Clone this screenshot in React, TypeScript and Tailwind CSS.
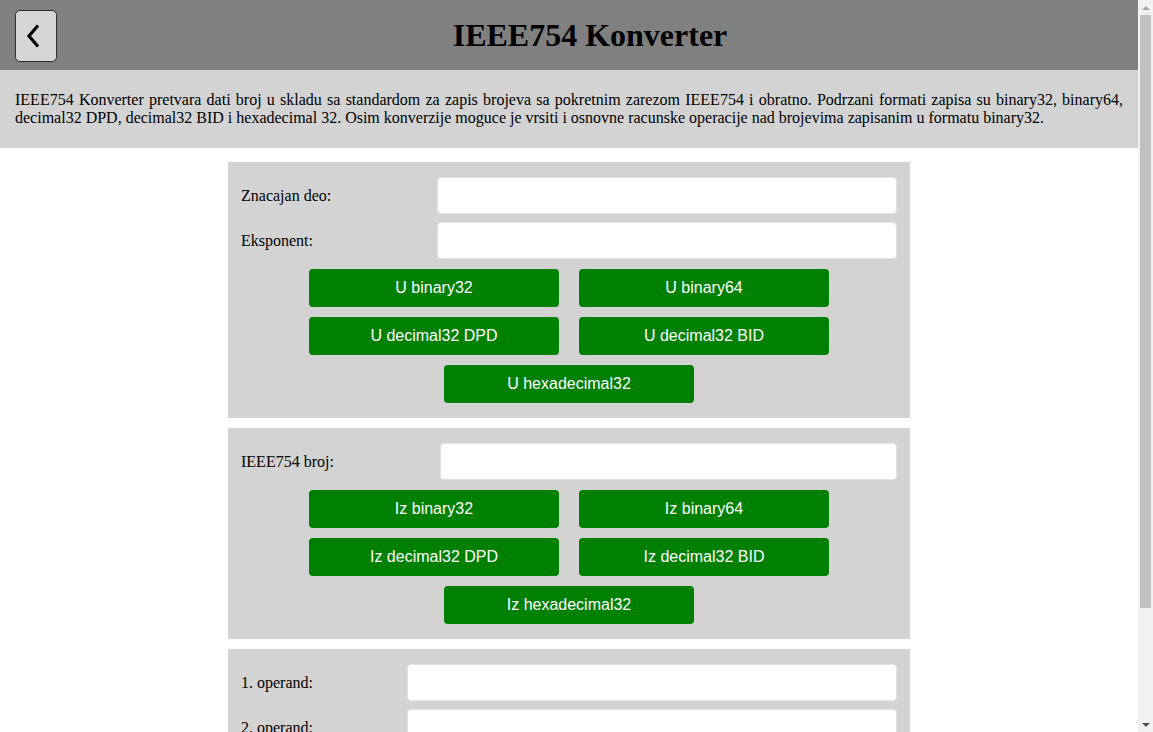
import React from "react";

const serif = { fontFamily: '"Liberation Serif", "Times New Roman", serif' };

function Field({ label, labelWidth }: { label: string; labelWidth: string }) {
  return (
    <div className="flex items-center">
      <label className={`${labelWidth} shrink-0 text-base text-black`}>{label}</label>
      <input
        type="text"
        className="h-[37px] flex-1 rounded-[4px] border border-[#e2e2e2] bg-white px-2 outline-none"
      />
    </div>
  );
}

function GreenButton({ children }: { children: React.ReactNode }) {
  return (
    <button
      className="h-[38px] w-[250px] rounded-[4px] bg-[#008000] text-base text-white"
      style={{ fontFamily: '"Liberation Sans", Arial, sans-serif' }}
    >
      {children}
    </button>
  );
}

function ButtonRows({ rows }: { rows: string[][] }) {
  return (
    <div className="mt-[10px] flex flex-col gap-[10px]">
      {rows.map((row) => (
        <div key={row.join()} className="flex justify-center gap-[20px]">
          {row.map((b) => (
            <GreenButton key={b}>{b}</GreenButton>
          ))}
        </div>
      ))}
    </div>
  );
}

// stand-in for the browser's page scrollbar seen in the screenshot
function Scrollbar() {
  return (
    <aside className="flex w-[15px] shrink-0 flex-col items-center bg-[#f1f1f1]">
      <div className="flex h-[15px] w-full items-center justify-center">
        <div className="h-0 w-0 border-x-[4px] border-b-[4px] border-x-transparent border-b-[#a3a3a3]" />
      </div>
      <div className="h-[593px] w-[11px] bg-[#c1c1c1]" />
      <div className="flex-1" />
      <div className="flex h-[15px] w-full items-center justify-center">
        <div className="h-0 w-0 border-x-[4px] border-t-[4px] border-x-transparent border-t-[#505050]" />
      </div>
    </aside>
  );
}

export default function App() {
  return (
    <div className="flex h-screen w-full bg-white text-black" style={serif}>
      <div className="min-w-0 flex-1 overflow-y-auto">
        <header className="flex h-[70px] items-start bg-[#808080] px-[15px] pt-[10px]">
          <button className="flex h-[52px] w-[42px] shrink-0 items-center justify-center rounded-[5px] border border-[#2e2e2e] bg-[#d6d6d6]">
            <svg width="22" height="26" viewBox="0 0 22 26" fill="none">
              <path d="M13 2.5 L4 13 L13 23.5" stroke="#000" strokeWidth="3.2" strokeLinecap="butt" strokeLinejoin="miter" />
            </svg>
          </button>
          <h1 className="flex-1 pt-[7px] text-center text-[32px] font-bold leading-[37px]">IEEE754 Konverter</h1>
        </header>

        <section className="bg-[#d3d3d3] px-[15px] py-[21px]">
          <p className="text-justify text-base leading-[18px]">
            IEEE754 Konverter pretvara dati broj u skladu sa standardom za zapis brojeva sa pokretnim zarezom IEEE754 i
            obratno. Podrzani formati zapisa su binary32, binary64, decimal32 DPD, decimal32 BID i hexadecimal 32. Osim
            konverzije moguce je vrsiti i osnovne racunske operacije nad brojevima zapisanim u formatu binary32.
          </p>
        </section>

        <main className="mx-auto flex w-[682px] flex-col gap-[10px] pb-[10px] pt-[14px]">
          <div className="flex flex-col bg-[#d3d3d3] px-[13px] pb-[15px] pt-[15px]">
            <div className="flex flex-col gap-[8px]">
              <Field label="Znacajan deo:" labelWidth="w-[196px]" />
              <Field label="Eksponent:" labelWidth="w-[196px]" />
            </div>
            <ButtonRows
              rows={[
                ["U binary32", "U binary64"],
                ["U decimal32 DPD", "U decimal32 BID"],
                ["U hexadecimal32"],
              ]}
            />
          </div>

          <div className="flex flex-col bg-[#d3d3d3] px-[13px] pb-[15px] pt-[15px]">
            <Field label="IEEE754 broj:" labelWidth="w-[199px]" />
            <ButtonRows
              rows={[
                ["Iz binary32", "Iz binary64"],
                ["Iz decimal32 DPD", "Iz decimal32 BID"],
                ["Iz hexadecimal32"],
              ]}
            />
          </div>

          <div className="flex flex-col bg-[#d3d3d3] px-[13px] pb-[15px] pt-[15px]">
            <div className="flex flex-col gap-[8px]">
              <Field label="1. operand:" labelWidth="w-[166px]" />
              <Field label="2. operand:" labelWidth="w-[166px]" />
            </div>
            <ButtonRows
              rows={[
                ["Saberi", "Oduzmi"],
                ["Pomnozi", "Podeli"],
              ]}
            />
          </div>
        </main>
      </div>
      <Scrollbar />
    </div>
  );
}
